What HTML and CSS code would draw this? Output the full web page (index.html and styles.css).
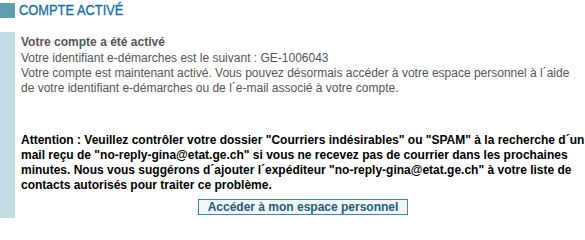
FILE: index.html
```html
<!DOCTYPE html>
<html lang="fr">
<head>
<meta charset="utf-8">
<title>Compte activé</title>
<link rel="stylesheet" href="styles.css">
</head>
<body>
<div class="header">
  <span class="square"></span>
  <h1 class="title">COMPTE ACTIVÉ</h1>
</div>
<div class="panel">
  <div class="bar"></div>
  <div class="content">
    <p class="lead">Votre compte a été activé</p>
    <p class="ident">Votre identifiant e-démarches est le suivant : GE-1006043</p>
    <p class="info">Votre compte est maintenant activé. Vous pouvez désormais accéder à votre espace personnel à l´aide de votre identifiant e-démarches ou de l´e-mail associé à votre compte.</p>
    <p class="warning">Attention : Veuillez contrôler votre dossier "Courriers indésirables" ou "SPAM" à la recherche d´un mail reçu de "no-reply-gina@etat.ge.ch" si vous ne recevez pas de courrier dans les prochaines minutes. Nous vous suggérons d´ajouter l´expéditeur "no-reply-gina@etat.ge.ch" à votre liste de contacts autorisés pour traiter ce problème.</p>
    <div class="actions">
      <button class="btn" type="button">Accéder à mon espace personnel</button>
    </div>
  </div>
</div>
</body>
</html>
```
FILE: styles.css
```css
html, body {
  margin: 0;
  padding: 0;
  background: #fff;
}
body {
  font-family: "Liberation Sans", Arial, sans-serif;
  font-size: 12px;
  line-height: 15px;
  color: #555;
  width: 585px;
}
.header {
  display: flex;
  align-items: flex-start;
  gap: 4px;
  padding-top: 3px;
  height: 29px;
  box-sizing: border-box;
}
.square {
  display: block;
  width: 15px;
  height: 15px;
  background: #5e9eb0;
}
.title {
  margin: -2px 0 0 0;
  font-size: 15.5px;
  line-height: 17px;
  font-weight: normal;
  color: #15709d;
  -webkit-text-stroke: 0.35px #15709d;
  transform: scaleX(0.83);
  transform-origin: left center;
}
.panel {
  display: flex;
  margin-top: 3px;
  height: 186px;
}
.bar {
  width: 15px;
  flex: none;
  background: #c3dce3;
}
.content {
  flex: 1;
  padding: 3px 0 0 6px;
}
.content p {
  margin: 0;
}
.lead {
  font-weight: bold;
  margin-bottom: 1px !important;
}
.info {
  margin-bottom: 37px !important;
}
.warning {
  font-weight: bold;
  color: #000;
}
.actions {
  display: flex;
  justify-content: center;
  margin-top: 6px;
}
.btn {
  font-family: "Liberation Sans", Arial, sans-serif;
  font-size: 12px;
  font-weight: bold;
  line-height: 14px;
  color: #245d78;
  background: #f2f6f9;
  border: 1px solid #3c8aa0;
  padding: 0 8px;
  width: 210px;
  height: 16px;
  margin: 0;
}
```
